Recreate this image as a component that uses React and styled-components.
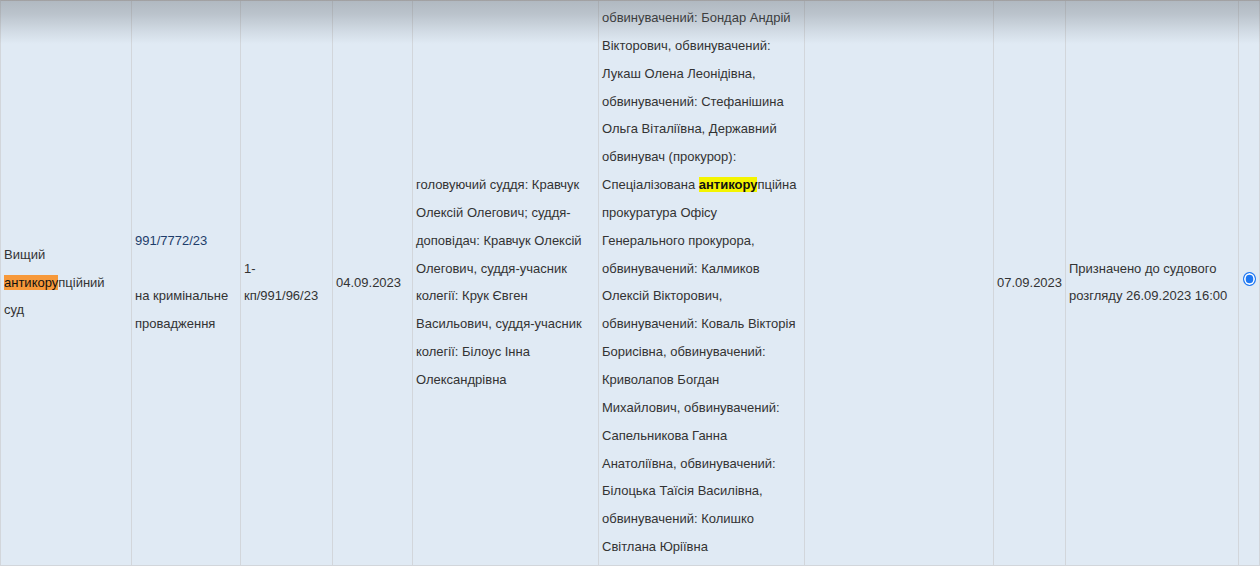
import React from "react";
import styled, { createGlobalStyle } from "styled-components";

const Global = createGlobalStyle`
  html, body { margin: 0; padding: 0; background: #ffffff; }
  body { font-family: "Liberation Sans", Arial, Helvetica, sans-serif; }
`;

const Wrapper = styled.div`
  position: relative;
  width: 1260px;
  overflow: hidden;
`;

const Shade = styled.div`
  position: absolute;
  top: 0;
  left: 0;
  right: 0;
  height: 44px;
  pointer-events: none;
  background: linear-gradient(
    to bottom,
    rgba(90, 95, 100, 0.36) 0px,
    rgba(90, 95, 100, 0.28) 14px,
    rgba(90, 95, 100, 0.1) 32px,
    rgba(90, 95, 100, 0) 44px
  );
`;

const Row = styled.div`
  display: grid;
  grid-template-columns: 131px 109px 92px 80px 186px 206px 189px 72px 173px 21px;
  border-left: 1px solid #d2d6db;
  border-top: 1px solid #c9c6c6;
  background: #e0eaf4;
  font-size: 13px;
  line-height: 27.85px;
  color: #333333;
`;

const Cell = styled.div`
  box-sizing: border-box;
  display: flex;
  align-items: center;
  justify-content: ${(p) => (p.$center ? "center" : "flex-start")};
  padding: 3px 3px 4px;
  border-right: 1px solid #d2d6db;
  border-bottom: 1px solid #d2d6db;
  min-width: 0;
`;

const Text = styled.div`
  min-width: 0;
`;

const CaseLink = styled.a`
  color: #1e3d6b;
  text-decoration: none;
`;

const Mark = styled.span`
  background: ${(p) => (p.$tone === "yellow" ? "#f4f400" : "#f7993a")};
  color: #111111;
  font-weight: ${(p) => (p.$bold ? 700 : 400)};
`;

const Radio = styled.span`
  box-sizing: border-box;
  display: block;
  width: 14px;
  height: 14px;
  margin: 0 0 6px 1px;
  border-radius: 50%;
  border: 1.5px solid #1f78f2;
  background: #1f78f2;
  box-shadow: inset 0 0 0 1.7px #ffffff;
`;

export default function App() {
  return (
    <>
      <Global />
      <Wrapper>
        <Row>
          <Cell>
            <Text>
              Вищий <Mark $tone="orange">антикору</Mark>пційний суд
            </Text>
          </Cell>
          <Cell>
            <Text>
              <CaseLink href="#">991/7772/23</CaseLink>
              <br />
              <br />
              на кримінальне провадження
            </Text>
          </Cell>
          <Cell>
            <Text>
              1-
              <br />
              кп/991/96/23
            </Text>
          </Cell>
          <Cell>
            <Text>04.09.2023</Text>
          </Cell>
          <Cell>
            <Text>
              головуючий суддя: Кравчук Олексій Олегович; суддя-доповідач:
              Кравчук Олексій Олегович, суддя-учасник колегії: Крук Євген
              Васильович, суддя-учасник колегії: Білоус Інна Олександрівна
            </Text>
          </Cell>
          <Cell>
            <Text>
              обвинувачений: Бондар Андрій Вікторович, обвинувачений: Лукаш
              Олена Леонідівна, обвинувачений: Стефанішина Ольга Віталіївна,
              Державний обвинувач (прокурор): Спеціалізована{" "}
              <Mark $tone="yellow" $bold>
                антикору
              </Mark>
              пційна прокуратура Офісу Генерального прокурора, обвинувачений:
              Калмиков Олексій Вікторович, обвинувачений: Коваль Вікторія
              Борисівна, обвинувачений: Криволапов Богдан Михайлович,
              обвинувачений: Сапельникова Ганна Анатоліївна, обвинувачений:
              Білоцька Таїсія Василівна, обвинувачений: Колишко Світлана
              Юріївна
            </Text>
          </Cell>
          <Cell />
          <Cell>
            <Text>07.09.2023</Text>
          </Cell>
          <Cell>
            <Text>Призначено до судового розгляду 26.09.2023 16:00</Text>
          </Cell>
          <Cell $center>
            <Radio role="radio" aria-checked="true" />
          </Cell>
        </Row>
        <Shade />
      </Wrapper>
    </>
  );
}
